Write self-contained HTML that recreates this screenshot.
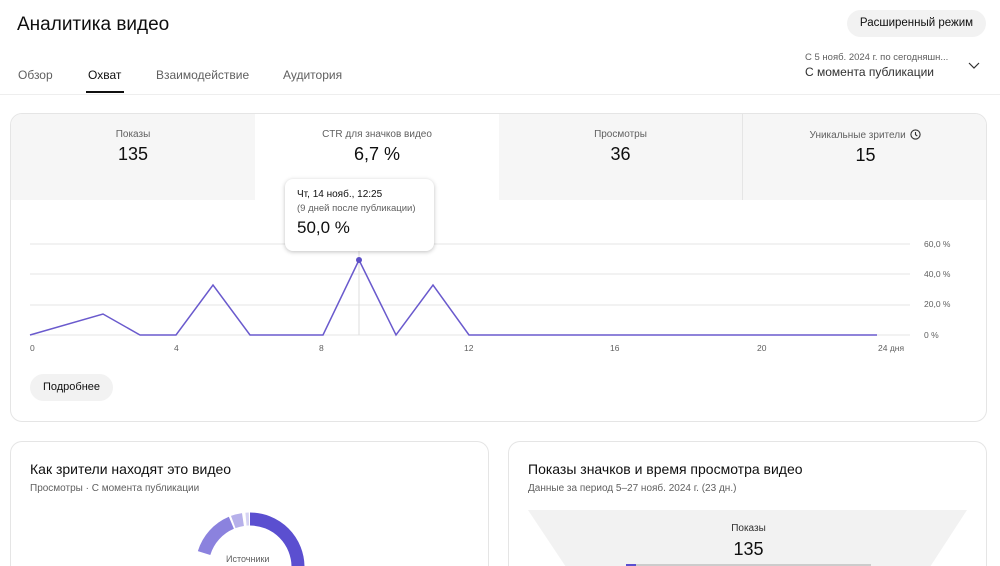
<!DOCTYPE html>
<html><head><meta charset="utf-8"><style>
*{box-sizing:border-box;margin:0;padding:0}
html,body{width:1000px;height:566px;overflow:hidden}
body{background:#fff;font-family:"Liberation Sans",sans-serif;color:#0f0f0f;position:relative}
.a{position:absolute;white-space:nowrap}
.card{position:absolute;border:1px solid #e5e5e5;border-radius:12px;background:#fff;overflow:hidden}
.tab{font-size:12px;color:#606060;top:68px}
.m{position:absolute;top:0;height:86px;background:#f6f6f6;text-align:center}
.m .l{font-size:10px;color:#606060;margin-top:15px}
.m .v{font-size:18px;margin-top:4px}
.yl{font-size:8.5px;color:#606060;left:924px}
.xl{font-size:8.5px;color:#606060;top:343px}
</style></head><body>
<div class="a" style="left:17px;top:14px;font-size:19px">Аналитика видео</div>
<div class="a" style="left:847px;top:10px;width:139px;height:27px;border-radius:14px;background:#f2f2f2;font-size:11.5px;line-height:27px;text-align:center">Расширенный режим</div>
<div class="a" style="left:805px;top:52px;font-size:9.5px;color:#606060">С 5 нояб. 2024 г. по сегодняшн...</div>
<div class="a" style="left:805px;top:65px;font-size:12px;color:#303030">С момента публикации</div>
<svg class="a" style="left:968px;top:61px" width="12" height="10"><path d="M1 2l5 5 5-5" fill="none" stroke="#303030" stroke-width="1.2"/></svg>
<div class="a tab" style="left:18px">Обзор</div>
<div class="a tab" style="left:88px;color:#0f0f0f">Охват</div>
<div class="a" style="left:86px;top:91px;width:38px;height:2px;background:#0f0f0f"></div>
<div class="a tab" style="left:156px">Взаимодействие</div>
<div class="a tab" style="left:283px">Аудитория</div>
<div class="a" style="left:0;top:94px;width:1000px;height:1px;background:#eee"></div>

<div class="card" style="left:10px;top:113px;width:977px;height:309px">
 <div class="m" style="left:0;width:244px"><div class="l">Показы</div><div class="v">135</div></div>
 <div class="m" style="left:244px;width:244px;background:#fff"><div class="l">CTR для значков видео</div><div class="v">6,7 %</div></div>
 <div class="m" style="left:488px;width:244px;border-right:1px solid #e5e5e5"><div class="l">Просмотры</div><div class="v">36</div></div>
 <div class="m" style="left:732px;width:245px"><div class="l">Уникальные зрители <svg width="11" height="11" style="vertical-align:-2px;margin-left:2px"><circle cx="5.5" cy="5.5" r="4.6" fill="none" stroke="#303030" stroke-width="1.1"/><path d="M5.5 3v2.7l1.8 1.3" fill="none" stroke="#303030" stroke-width="1.1"/></svg></div><div class="v">15</div></div>
</div>
<svg class="a" style="left:0;top:0" width="1000" height="420">
<g stroke="#e5e5e5" stroke-width="1"><line x1="30" y1="244" x2="910" y2="244"/><line x1="30" y1="274" x2="910" y2="274"/><line x1="30" y1="305" x2="910" y2="305"/><line x1="30" y1="335" x2="910" y2="335"/></g>
<line x1="359" y1="250" x2="359" y2="335" stroke="#ddd"/>
<polyline fill="none" stroke="#6a5acd" stroke-width="1.5" points="30,335 103,314 140,335 176,335 213,285 250,335 323,335 359,260 396,335 433,285 469,335 877,335"/>
<circle cx="359" cy="260" r="3" fill="#5c4fc7"/>
</svg>
<div class="a yl" style="top:239px">60,0 %</div>
<div class="a yl" style="top:269px">40,0 %</div>
<div class="a yl" style="top:299px">20,0 %</div>
<div class="a yl" style="top:330px">0 %</div>
<div class="a xl" style="left:30px">0</div><div class="a xl" style="left:174px">4</div><div class="a xl" style="left:319px">8</div><div class="a xl" style="left:464px">12</div><div class="a xl" style="left:610px">16</div><div class="a xl" style="left:757px">20</div><div class="a xl" style="left:878px">24 дня</div>
<div class="a" style="left:285px;top:179px;width:149px;height:72px;background:#fff;border-radius:8px;box-shadow:0 1px 4px rgba(0,0,0,.25);padding:10px 12px">
 <div style="font-size:10px">Чт, 14 нояб., 12:25</div>
 <div style="font-size:9.5px;color:#606060;margin-top:3px">(9 дней после публикации)</div>
 <div style="font-size:17px;margin-top:4px">50,0 %</div>
</div>
<div class="a" style="left:30px;top:374px;width:83px;height:27px;border-radius:14px;background:#f2f2f2;font-size:11px;line-height:27px;text-align:center">Подробнее</div>

<div class="card" style="left:10px;top:441px;width:479px;height:125px;border-bottom:none;border-radius:12px 12px 0 0">
 <div class="a" style="left:19px;top:19px;font-size:14px">Как зрители находят это видео</div>
 <div class="a" style="left:19px;top:41px;font-size:10px;color:#606060">Просмотры · С момента публикации</div>
 <svg class="a" style="left:180px;top:66px" width="120" height="80"><g fill="none" stroke-width="13">
  <circle cx="59" cy="59" r="48" stroke="#5b4fd0" stroke-dasharray="100 302" transform="rotate(-90 59 59)"/>
  <circle cx="59" cy="59" r="48" stroke="#8b82de" stroke-dasharray="0 240 42 200" transform="rotate(-90 59 59)"/>
  <circle cx="59" cy="59" r="48" stroke="#b6b0ea" stroke-dasharray="0 284 10 200" transform="rotate(-90 59 59)"/>
  <circle cx="59" cy="59" r="48" stroke="#d6d3f3" stroke-dasharray="0 297 3 3 3 200" transform="rotate(-90 59 59)"/>
 </g></svg>
 <div class="a" style="left:215px;top:112px;font-size:9px;color:#606060">Источники</div>
</div>
<div class="card" style="left:508px;top:441px;width:479px;height:125px;border-bottom:none;border-radius:12px 12px 0 0">
 <div class="a" style="left:19px;top:19px;font-size:14px">Показы значков и время просмотра видео</div>
 <div class="a" style="left:19px;top:41px;font-size:10px;color:#606060">Данные за период 5–27 нояб. 2024 г. (23 дн.)</div>
 <svg class="a" style="left:19px;top:68px" width="440" height="60"><polygon points="0,0 439,0 400,60 40,60" fill="#f2f2f2"/></svg>
 <div class="a" style="left:0;width:479px;text-align:center;top:81px;font-size:10px;color:#303030">Показы</div>
 <div class="a" style="left:0;width:479px;text-align:center;top:97px;font-size:18px">135</div>
 <div class="a" style="left:117px;top:122px;width:245px;height:4px;background:#ccc"></div>
 <div class="a" style="left:117px;top:122px;width:10px;height:4px;background:#5b4fd0"></div>
</div>
</body></html>
